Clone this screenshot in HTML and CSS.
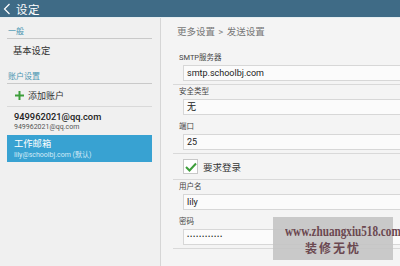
FILE: index.html
```html
<!DOCTYPE html>
<html lang="zh-CN">
<head>
  <meta charset="UTF-8" />
  <title>设定</title>
  <link rel="stylesheet" href="styles.css">
</head>
<body>
  <header class="topbar">
    <svg class="back" width="8" height="12" viewBox="0 0 8 12">
      <path d="M6.5 1 L1.5 6 L6.5 11" fill="none" stroke="#fff" stroke-width="1.2" />
    </svg>
    <span class="title">设定</span>
  </header>

  <div class="main">
    <!-- Left: settings categories -->
    <aside class="sidebar">
      <div class="section-title">一般</div>
      <div class="item plain">基本设定</div>

      <div class="section-title second">账户设置</div>
      <div class="item add">
        <svg width="9" height="9" viewBox="0 0 9 9">
          <path d="M4.5 0 V9 M0 4.5 H9" stroke="#3d9e3a" stroke-width="2" />
        </svg>
        <span>添加账户</span>
      </div>
      <div class="account">
        <div class="acc-name">949962021@qq.com</div>
        <div class="acc-mail">949962021@qq.com</div>
      </div>
      <div class="account selected">
        <div class="acc-name">工作邮箱</div>
        <div class="acc-mail">lily@schoolbj.com (默认)</div>
      </div>
    </aside>

    <!-- Right: send settings -->
    <section class="content">
      <div class="crumbs">更多设置 <span class="sep">&gt;</span> 发送设置</div>

      <div class="card">
        <div class="group">
          <div class="field">
            <div class="label">SMTP服务器</div>
            <div class="input">smtp.schoolbj.com</div>
          </div>
        </div>

        <div class="group">
          <div class="field">
            <div class="label">安全类型</div>
            <div class="input">无</div>
          </div>
          <div class="field">
            <div class="label">端口</div>
            <div class="input">25</div>
          </div>
        </div>

        <div class="group check-row">
          <span class="checkbox">
            <svg width="12" height="10" viewBox="0 0 12 10">
              <path d="M1 5 L4.5 8.5 L11 1.5" fill="none" stroke="#3d9e3a" stroke-width="2" />
            </svg>
          </span>
          <span>要求登录</span>
        </div>

        <div class="group">
          <div class="field">
            <div class="label">用户名</div>
            <div class="input">lily</div>
          </div>
          <div class="field">
            <div class="label">密码</div>
            <div class="input dots">••••••••••••</div>
          </div>
        </div>
      </div>
    </section>
  </div>

  <div class="watermark">
    <div class="wm-url">www.zhuangxiu518.com</div>
    <div class="wm-name">装修无忧</div>
  </div>
</body>
</html>
```

FILE: styles.css
```css
html, body {
  margin: 0;
  height: 100%;
  overflow: hidden;
}
body {
  font-family: Roboto, "Noto Sans CJK SC", sans-serif;
  background: #f2f2f2;
  color: #222;
  width: 400px;
  height: 266px;
  position: relative;
}
.topbar {
  height: 17px;
  background: #3f6b86;
  border-bottom: 1px solid #e6eef1;
  display: flex;
  align-items: center;
  padding-left: 3px;
  color: #fff;
}
.topbar .back {
  margin-right: 5px;
}
.topbar .title {
  font-size: 11.5px;
  letter-spacing: 0.5px;
}
.main {
  display: flex;
  height: 248px;
}
.sidebar {
  width: 145px;
  padding: 0 8px 0 7px;
  border-right: 1px solid #d6d6d6;
  background: #f0f0f0;
  flex: none;
}
.section-title {
  font-size: 8px;
  line-height: 12px;
  color: #4a95b0;
  margin-top: 8px;
  padding-left: 1px;
  border-bottom: 1px solid #c9c9c9;
}
.section-title.second {
  margin-top: 13px;
}
.item.plain {
  font-size: 9.3px;
  line-height: 14px;
  padding: 5px 0 0 6px;
  color: #333;
}
.item.add {
  display: flex;
  align-items: center;
  gap: 4px;
  font-size: 9px;
  color: #333;
  height: 22px;
  padding-left: 8px;
  border-bottom: 1px solid #d9d9d9;
}
.account {
  padding: 4px 0 2px 7px;
}
.acc-name {
  font-size: 9.3px;
  line-height: 12px;
  font-weight: 500;
}
.acc-mail {
  font-size: 7px;
  line-height: 9px;
  color: #555;
}
.account.selected {
  background: #38a2d2;
  margin-top: 1px;
  padding: 3px 0 2px 7px;
}
.account.selected .acc-name {
  color: #fff;
  font-weight: 400;
  font-size: 9.3px;
  line-height: 12px;
}
.account.selected .acc-mail {
  color: #d4ecf8;
  line-height: 10px;
}
.content {
  flex: 1;
  background: #f4f4f4;
  padding-left: 12px;
}
.crumbs {
  font-size: 9.5px;
  color: #777;
  line-height: 12px;
  margin-top: 8px;
  padding-left: 4px;
}
.crumbs .sep {
  color: #888;
  margin: 0 1px;
}
.card {
  margin-top: 13px;
}
.group {
  border-bottom: 1px solid #d9d9d9;
  padding: 1px 0 3px;
  display: flex;
  flex-direction: column;
  gap: 6px;
}
.field .label {
  font-size: 7.5px;
  line-height: 12px;
  color: #444;
  padding-left: 6px;
  margin-bottom: 1px;
}
.field .input {
  margin-left: 10px;
  height: 14px;
  line-height: 14px;
  background: #fbfbfb;
  border: 1px solid #d7d7d7;
  border-right: none;
  font-size: 9px;
  padding-left: 3px;
  color: #222;
}
.field .input.dots {
  font-size: 6.5px;
  letter-spacing: 0.8px;
}
.check-row {
  flex-direction: row;
  align-items: center;
  gap: 5px;
  height: 21px;
  padding: 2px 0 2px 10px;
  font-size: 9.5px;
  color: #333;
}
.checkbox {
  width: 13px;
  height: 13px;
  background: #fff;
  border: 1px solid #c8c8c8;
  display: flex;
  align-items: center;
  justify-content: center;
}
.watermark {
  position: absolute;
  left: 273px;
  top: 217px;
  width: 120px;
  height: 43px;
  background: rgba(196, 196, 196, 0.92);
  color: #6b4850;
  text-align: center;
}
.wm-url {
  font-family: "Liberation Serif", serif;
  font-weight: bold;
  font-size: 14px;
  line-height: 17px;
  margin-top: 6px;
  transform: scaleX(0.8);
  white-space: nowrap;
}
.wm-name {
  font-family: "Noto Sans CJK SC", sans-serif;
  font-weight: bold;
  font-size: 12px;
  line-height: 15px;
  letter-spacing: 2px;
}
```
